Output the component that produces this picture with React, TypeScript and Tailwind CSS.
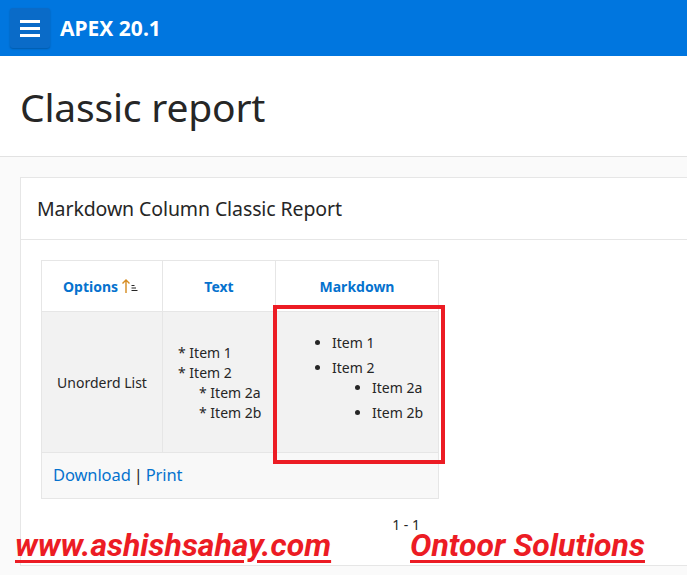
import React from "react";

const font = { fontFamily: '"Noto Sans", "Open Sans", sans-serif' };

export default function App() {
  return (
    <div className="relative w-[687px] h-[575px] overflow-hidden bg-[#fafafa]" style={font}>
      {/* Header */}
      <div className="h-[56px] bg-[#0076df] flex items-center pl-[10px]">
        <div className="w-[40px] h-[40px] rounded-[3px] bg-[#0a6bc8] shadow-[0_1px_2px_rgba(0,0,0,0.25)] flex flex-col items-center justify-center gap-[4px]">
          <div className="w-[20px] h-[3px] bg-white" />
          <div className="w-[20px] h-[3px] bg-white" />
          <div className="w-[20px] h-[3px] bg-white" />
        </div>
        <div className="ml-[10px] text-white font-bold text-[21px] leading-none">APEX 20.1</div>
      </div>
      {/* Title */}
      <div className="h-[101px] bg-white border-b border-[#e2e2e2] flex items-center pl-[20px]">
        <h1 className="text-[39px] text-[#262626] leading-none tracking-[-0.2px]">Classic report</h1>
      </div>
      {/* Card */}
      <div className="ml-[20px] mt-[20px] w-[700px] h-[389px] bg-white border border-[#e6e6e6]">
        <div className="h-[62px] border-b border-[#e6e6e6] flex items-center pl-[16px]">
          <h2 className="text-[19.5px] text-[#262626] leading-none tracking-[-0.1px]">Markdown Column Classic Report</h2>
        </div>
        <div className="pl-[20px] pt-[20px]">
          <table className="border-collapse border border-[#e6e6e6] text-[14px] text-[#262626]">
            <thead>
              <tr className="h-[51px] bg-white">
                <th className="w-[121px] border border-[#e6e6e6] text-[#0572ce] font-bold text-[14px]">
                  <span className="inline-flex items-center gap-[3px] -ml-[2px]">
                    Options
                    <svg width="18" height="18" viewBox="0 0 18 18">
                      <path d="M5 16V3M1.5 6.5L5 3l3.5 3.5" stroke="#d58b1f" strokeWidth="1.4" fill="none" />
                      <path d="M10.5 8.5h3M10.5 11h4.5M10.5 13.5h6" stroke="#262626" strokeWidth="1.2" />
                    </svg>
                  </span>
                </th>
                <th className="w-[113px] border border-[#e6e6e6] text-[#0572ce] font-bold text-[14px]">Text</th>
                <th className="w-[163px] border border-[#e6e6e6] text-[#0572ce] font-bold text-[14px]">Markdown</th>
              </tr>
            </thead>
            <tbody>
              <tr className="h-[141px] bg-[#f2f2f2]">
                <td className="border border-[#e6e6e6] text-center align-middle">Unorderd List</td>
                <td className="border border-[#e6e6e6] align-middle pl-[15px] leading-[20px] pt-[2px]">
                  <div>* Item 1</div>
                  <div>* Item 2</div>
                  <div className="pl-[21px]">* Item 2a</div>
                  <div className="pl-[21px]">* Item 2b</div>
                </td>
                <td className="border border-[#e6e6e6] align-top pt-[21px] leading-[20px]">
                  <ul className="list-disc pl-[56px]">
                    <li className="mb-[5px]">Item 1</li>
                    <li className="mb-[5px]">
                      Item 2
                      <ul className="list-disc pl-[40px]">
                        <li className="mb-[5px]">Item 2a</li>
                        <li className="mb-[5px]">Item 2b</li>
                      </ul>
                    </li>
                  </ul>
                </td>
              </tr>
              <tr className="h-[46px] bg-[#f8f8f8]">
                <td colSpan={3} className="border border-[#e6e6e6] pl-[11px] text-[16.5px] tracking-[-0.1px]">
                  <span className="text-[#0572ce]">Download</span>
                  <span className="text-[#262626] mx-[3px]">|</span>
                  <span className="text-[#0572ce]">Print</span>
                </td>
              </tr>
            </tbody>
          </table>
          <div className="w-[397px] flex justify-end pr-[18px] pt-[19px] text-[14px] text-[#262626] leading-none">1 - 1</div>
        </div>
      </div>
      {/* Red highlight box */}
      <div className="absolute left-[273px] top-[305px] w-[172px] h-[159px] border-[4px] border-[#ec1c24]" />
      {/* Watermarks */}
      <div
        className="absolute left-[15px] top-[535px] text-[#ec1c24] font-bold italic text-[32px] leading-[20px] underline decoration-[3px] underline-offset-[4px]"
        style={{ fontFamily: 'Roboto, "Liberation Sans", sans-serif' }}
      >
        www.ashishsahay.com
      </div>
      <div
        className="absolute left-[410px] top-[535px] text-[#ec1c24] font-bold italic text-[32px] leading-[20px] underline decoration-[3px] underline-offset-[4px]"
        style={{ fontFamily: 'Roboto, "Liberation Sans", sans-serif' }}
      >
        Ontoor Solutions
      </div>
    </div>
  );
}
